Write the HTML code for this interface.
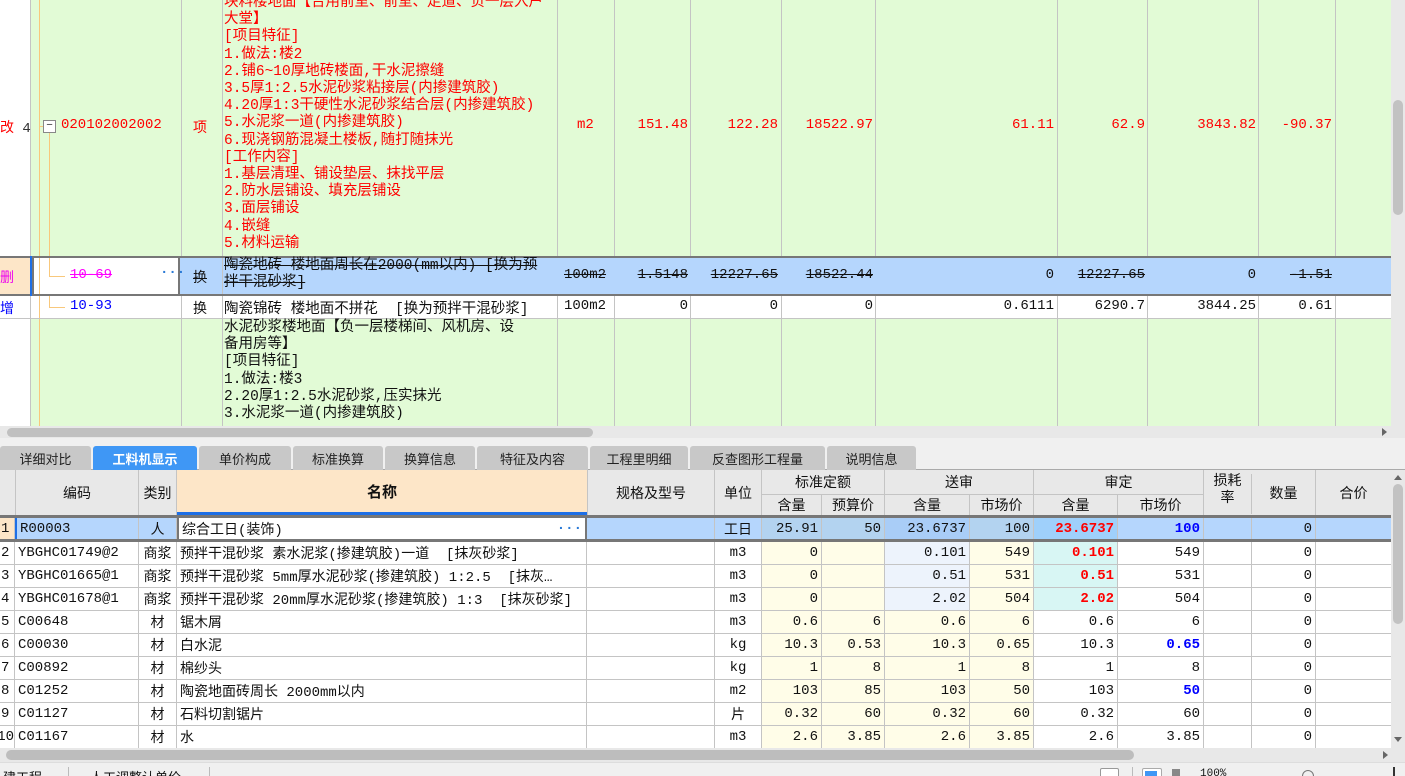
<!DOCTYPE html>
<html><head><meta charset="utf-8">
<style>
*{box-sizing:border-box;margin:0;padding:0}
body{width:1405px;height:776px;overflow:hidden;background:#f0f0f0;font-family:"Liberation Mono","Noto Sans CJK SC",monospace;font-size:14px;color:#111;position:relative}
.a{position:absolute;white-space:nowrap}
.row{position:absolute;left:0;display:flex}
.c{height:100%;border-right:1px solid #c4c4c4;white-space:nowrap;overflow:hidden;padding:0 3px;display:flex;align-items:center;flex:none}
.r{justify-content:flex-end}
.m{justify-content:center}
.red{color:#f00}.blue{color:#00f}
.s{text-decoration:line-through}
.b{font-weight:bold}
.vl{position:absolute;width:1px;background:#c4c4c4}
.tab{position:absolute;top:446px;height:24px;background:#c8c8c8;border-radius:3px 3px 0 0;display:flex;align-items:center;justify-content:center;font-size:13px;color:#222}
.br{border-bottom:1px solid #c4c4c4}
.y{background:#fffde8}.lb{background:#edf3fc}.cy{background:#d8f6f4}
.t{font-size:14.5px}
</style></head><body>

<div class="a" style="left:0;top:0;width:1391px;height:426px;background:#fff"></div>
<div class="a" style="left:30px;top:0;width:1361px;height:256px;background:#e2fbd6"></div>
<div class="a" style="left:30px;top:319px;width:1361px;height:107px;background:#e2fbd6"></div>
<div class="vl" style="left:30px;top:0;height:426px"></div>
<div class="vl" style="left:181px;top:0;height:426px"></div>
<div class="vl" style="left:222px;top:0;height:426px"></div>
<div class="vl" style="left:557px;top:0;height:426px"></div>
<div class="vl" style="left:614px;top:0;height:426px"></div>
<div class="vl" style="left:690px;top:0;height:426px"></div>
<div class="vl" style="left:781px;top:0;height:426px"></div>
<div class="vl" style="left:875px;top:0;height:426px"></div>
<div class="vl" style="left:1057px;top:0;height:426px"></div>
<div class="vl" style="left:1147px;top:0;height:426px"></div>
<div class="vl" style="left:1258px;top:0;height:426px"></div>
<div class="vl" style="left:1335px;top:0;height:426px"></div>
<div class="a" style="left:39px;top:0;width:1px;height:426px;background:#f8c87c"></div>
<div class="a" style="left:49px;top:133px;width:1px;height:175px;background:#f8c87c"></div>
<div class="a" style="left:39px;top:126px;width:4px;height:1px;background:#f8c87c"></div>
<div class="a" style="left:43px;top:120px;width:13px;height:13px;border:1px solid #888;background:#fff;font-size:11px;line-height:10px;text-align:center;color:#333">−</div>

<div class="a red" style="left:0;top:117px">改 <span style="color:#333">4</span></div>
<div class="a red" style="left:61px;top:117px">020102002002</div>
<div class="a red" style="left:193px;top:117px">项</div>
<div class="a red t" style="left:224px;top:-5px;line-height:17.2px">块料楼地面【合用前室、前室、走道、负一层入户<br>大堂】<br>[项目特征]<br>1.做法:楼2<br>2.铺6~10厚地砖楼面,干水泥擦缝<br>3.5厚1:2.5水泥砂浆粘接层(内掺建筑胶)<br>4.20厚1:3干硬性水泥砂浆结合层(内掺建筑胶)<br>5.水泥浆一道(内掺建筑胶)<br>6.现浇钢筋混凝土楼板,随打随抹光<br>[工作内容]<br>1.基层清理、铺设垫层、抹找平层<br>2.防水层铺设、填充层铺设<br>3.面层铺设<br>4.嵌缝<br>5.材料运输</div>
<div class="a red" style="left:577px;top:117px">m2</div>
<div class="a red" style="left:614px;top:117px;width:74px;text-align:right">151.48</div>
<div class="a red" style="left:690px;top:117px;width:88px;text-align:right">122.28</div>
<div class="a red" style="left:781px;top:117px;width:92px;text-align:right">18522.97</div>
<div class="a red" style="left:875px;top:117px;width:179px;text-align:right">61.11</div>
<div class="a red" style="left:1057px;top:117px;width:88px;text-align:right">62.9</div>
<div class="a red" style="left:1147px;top:117px;width:109px;text-align:right">3843.82</div>
<div class="a red" style="left:1258px;top:117px;width:74px;text-align:right">-90.37</div>

<div class="a" style="left:0;top:256px;width:1391px;height:40px;background:#b5d6fd;border-top:2px solid #777;border-bottom:2px solid #777"></div>
<div class="a" style="left:0;top:258px;width:30px;height:36px;background:#fde6c8"></div>
<div class="a" style="left:30px;top:256px;width:2px;height:40px;background:#1e6fe6"></div>
<div class="a" style="left:32px;top:258px;width:148px;height:36px;background:#fff;border:2px solid #777;border-top:0;border-bottom:0"></div>
<div class="a" style="left:39px;top:258px;width:1px;height:36px;background:#f8c87c"></div>
<div class="a" style="left:49px;top:258px;width:1px;height:18px;background:#f8c87c"></div>
<div class="a" style="left:49px;top:276px;width:16px;height:1px;background:#f8c87c"></div>
<div class="a" style="left:0;top:267px;color:#e0e">删</div>
<div class="a s" style="left:70px;top:267px;color:#f0f">10-69</div>
<div class="a" style="left:160px;top:265px;color:#2a7ad6;font-weight:bold">···</div>
<div class="vl" style="left:222px;top:258px;height:36px"></div>
<div class="a s" style="left:193px;top:267px">换</div>
<div class="a s t" style="left:224px;top:258px;line-height:17px">陶瓷地砖 楼地面周长在2000(mm以内) [换为预<br>拌干混砂浆]</div>
<div class="a s" style="left:564px;top:267px">100m2</div>
<div class="a s" style="left:614px;top:267px;width:74px;text-align:right">1.5148</div>
<div class="a s" style="left:690px;top:267px;width:88px;text-align:right">12227.65</div>
<div class="a s" style="left:781px;top:267px;width:92px;text-align:right">18522.44</div>
<div class="a" style="left:875px;top:267px;width:179px;text-align:right">0</div>
<div class="a s" style="left:1057px;top:267px;width:88px;text-align:right">12227.65</div>
<div class="a" style="left:1147px;top:267px;width:109px;text-align:right">0</div>
<div class="a s" style="left:1258px;top:267px;width:74px;text-align:right">-1.51</div>

<div class="a" style="left:0;top:318px;width:1391px;height:1px;background:#c4c4c4"></div>
<div class="a" style="left:49px;top:296px;width:1px;height:11px;background:#f8c87c"></div>
<div class="a" style="left:49px;top:307px;width:16px;height:1px;background:#f8c87c"></div>
<div class="a blue" style="left:0;top:298px">增</div>
<div class="a blue" style="left:70px;top:298px">10-93</div>
<div class="a" style="left:193px;top:298px">换</div>
<div class="a t" style="left:224px;top:297px">陶瓷锦砖 楼地面不拼花 &nbsp;[换为预拌干混砂浆]</div>
<div class="a" style="left:564px;top:298px">100m2</div>
<div class="a" style="left:614px;top:298px;width:74px;text-align:right">0</div>
<div class="a" style="left:690px;top:298px;width:88px;text-align:right">0</div>
<div class="a" style="left:781px;top:298px;width:92px;text-align:right">0</div>
<div class="a" style="left:875px;top:298px;width:179px;text-align:right">0.6111</div>
<div class="a" style="left:1057px;top:298px;width:88px;text-align:right">6290.7</div>
<div class="a" style="left:1147px;top:298px;width:109px;text-align:right">3844.25</div>
<div class="a" style="left:1258px;top:298px;width:74px;text-align:right">0.61</div>

<div class="a t" style="left:224px;top:320px;line-height:17.2px">水泥砂浆楼地面【负一层楼梯间、风机房、设<br>备用房等】<br>[项目特征]<br>1.做法:楼3<br>2.20厚1:2.5水泥砂浆,压实抹光<br>3.水泥浆一道(内掺建筑胶)</div>

<div class="a" style="left:1391px;top:0;width:14px;height:438px;background:#e8e8e8"></div>
<div class="a" style="left:1393px;top:100px;width:10px;height:115px;background:#c2c2c2;border-radius:5px"></div>
<div class="a" style="left:0;top:426px;width:1405px;height:12px;background:#e8e8e8"></div>
<div class="a" style="left:7px;top:428px;width:586px;height:9px;background:#c0c0c0;border-radius:5px"></div>
<div class="a" style="left:1382px;top:428px;width:0;height:0;border-left:5px solid #666;border-top:4px solid transparent;border-bottom:4px solid transparent"></div>

<div class="a" style="left:0;top:469px;width:1405px;height:1px;background:#aaa"></div>
<div class="tab" style="left:0;width:91px">详细对比</div>
<div class="tab" style="left:93px;width:104px;background:#3f97f5;color:#fff;font-weight:bold">工料机显示</div>
<div class="tab" style="left:199px;width:92px">单价构成</div>
<div class="tab" style="left:293px;width:90px">标准换算</div>
<div class="tab" style="left:385px;width:90px">换算信息</div>
<div class="tab" style="left:477px;width:111px">特征及内容</div>
<div class="tab" style="left:590px;width:98px">工程里明细</div>
<div class="tab" style="left:690px;width:135px">反查图形工程量</div>
<div class="tab" style="left:827px;width:89px">说明信息</div>

<div class="a" style="left:0;top:470px;width:1391px;height:48px;background:#e8e8e8;border-bottom:3px solid #777"></div>
<div class="a" style="left:177px;top:470px;width:410px;height:45px;background:#fde6c8;border-bottom:3px solid #1e6fe6;display:flex;align-items:center;justify-content:center;font-weight:bold;font-size:15px">名称</div>
<div class="a" style="left:15px;top:470px;width:124px;height:45px;border-right:1px solid #c4c4c4;border-left:1px solid #c4c4c4;display:flex;align-items:center;justify-content:center">编码</div>
<div class="a" style="left:139px;top:470px;width:38px;height:45px;border-right:1px solid #c4c4c4;display:flex;align-items:center;justify-content:center">类别</div>
<div class="a" style="left:587px;top:470px;width:128px;height:45px;border-left:1px solid #c4c4c4;border-right:1px solid #c4c4c4;display:flex;align-items:center;justify-content:center">规格及型号</div>
<div class="a" style="left:715px;top:470px;width:47px;height:45px;border-right:1px solid #c4c4c4;display:flex;align-items:center;justify-content:center">单位</div>
<div class="a" style="left:762px;top:470px;width:123px;height:25px;border-right:1px solid #c4c4c4;border-bottom:1px solid #c4c4c4;display:flex;align-items:center;justify-content:center">标准定额</div>
<div class="a" style="left:885px;top:470px;width:149px;height:25px;border-right:1px solid #c4c4c4;border-bottom:1px solid #c4c4c4;display:flex;align-items:center;justify-content:center">送审</div>
<div class="a" style="left:1034px;top:470px;width:170px;height:25px;border-right:1px solid #c4c4c4;border-bottom:1px solid #c4c4c4;display:flex;align-items:center;justify-content:center">审定</div>
<div class="a" style="left:762px;top:495px;width:60px;height:20px;border-right:1px solid #c4c4c4;text-align:center">含量</div>
<div class="a" style="left:822px;top:495px;width:63px;height:20px;border-right:1px solid #c4c4c4;text-align:center">预算价</div>
<div class="a" style="left:885px;top:495px;width:85px;height:20px;border-right:1px solid #c4c4c4;text-align:center">含量</div>
<div class="a" style="left:970px;top:495px;width:64px;height:20px;border-right:1px solid #c4c4c4;text-align:center">市场价</div>
<div class="a" style="left:1034px;top:495px;width:84px;height:20px;border-right:1px solid #c4c4c4;text-align:center">含量</div>
<div class="a" style="left:1118px;top:495px;width:86px;height:20px;border-right:1px solid #c4c4c4;text-align:center">市场价</div>
<div class="a" style="left:1204px;top:474px;width:48px;height:40px;border-right:1px solid #c4c4c4;text-align:center;line-height:17px">损耗<br>率</div>
<div class="a" style="left:1252px;top:470px;width:64px;height:45px;border-right:1px solid #c4c4c4;display:flex;align-items:center;justify-content:center">数量</div>
<div class="a" style="left:1316px;top:470px;width:75px;height:45px;display:flex;align-items:center;justify-content:center">合价</div>

<div class="a" style="left:0;top:518px;width:1391px;height:230px;background:#fff"></div>

<div class="row" style="top:518px;background:#b5d6fd;border-bottom:3px solid #777;height:24px">
 <div class="c" style="width:15px;background:#fde6c8;padding:0 1px">1</div>
 <div class="c" style="width:124px;border-left:2px solid #1e6fe6">R00003</div>
 <div class="c m" style="width:38px">人</div>
 <div class="c" style="width:410px;background:#fff;border:2px solid #777;border-top:0;border-bottom:0;justify-content:space-between">综合工日(装饰)<span style="color:#2a7ad6;font-weight:bold">···</span></div>
 <div class="c" style="width:128px"></div>
 <div class="c m" style="width:47px">工日</div>
 <div class="c r" style="width:60px;background:#b3d3f0">25.91</div>
 <div class="c r" style="width:63px;background:#b3d3f0">50</div>
 <div class="c r" style="width:85px;background:#a9cdf7">23.6737</div>
 <div class="c r" style="width:64px;background:#b3d3f0">100</div>
 <div class="c r red b" style="width:84px;background:#9fd0fb">23.6737</div>
 <div class="c r blue b" style="width:86px">100</div>
 <div class="c" style="width:48px"></div>
 <div class="c r" style="width:64px">0</div>
 <div class="c" style="width:75px;border:0"></div>
</div>

<div class="row br" style="top:542px;height:23px">
 <div class="c" style="width:15px;padding:0 1px">2</div><div class="c" style="width:124px">YBGHC01749@2</div><div class="c m" style="width:38px">商浆</div>
 <div class="c" style="width:410px">预拌干混砂浆 素水泥浆(掺建筑胶)一道 &nbsp;[抹灰砂浆]</div><div class="c" style="width:128px"></div><div class="c m" style="width:47px">m3</div>
 <div class="c r y" style="width:60px">0</div><div class="c r y" style="width:63px"></div><div class="c r lb" style="width:85px">0.101</div><div class="c r y" style="width:64px">549</div>
 <div class="c r cy red b" style="width:84px">0.101</div><div class="c r" style="width:86px">549</div><div class="c" style="width:48px"></div><div class="c r" style="width:64px">0</div><div class="c" style="width:75px;border:0"></div>
</div>
<div class="row br" style="top:565px;height:23px">
 <div class="c" style="width:15px;padding:0 1px">3</div><div class="c" style="width:124px">YBGHC01665@1</div><div class="c m" style="width:38px">商浆</div>
 <div class="c" style="width:410px">预拌干混砂浆 5mm厚水泥砂浆(掺建筑胶) 1:2.5 &nbsp;[抹灰…</div><div class="c" style="width:128px"></div><div class="c m" style="width:47px">m3</div>
 <div class="c r y" style="width:60px">0</div><div class="c r y" style="width:63px"></div><div class="c r lb" style="width:85px">0.51</div><div class="c r y" style="width:64px">531</div>
 <div class="c r cy red b" style="width:84px">0.51</div><div class="c r" style="width:86px">531</div><div class="c" style="width:48px"></div><div class="c r" style="width:64px">0</div><div class="c" style="width:75px;border:0"></div>
</div>
<div class="row br" style="top:588px;height:23px">
 <div class="c" style="width:15px;padding:0 1px">4</div><div class="c" style="width:124px">YBGHC01678@1</div><div class="c m" style="width:38px">商浆</div>
 <div class="c" style="width:410px">预拌干混砂浆 20mm厚水泥砂浆(掺建筑胶) 1:3 &nbsp;[抹灰砂浆]</div><div class="c" style="width:128px"></div><div class="c m" style="width:47px">m3</div>
 <div class="c r y" style="width:60px">0</div><div class="c r y" style="width:63px"></div><div class="c r lb" style="width:85px">2.02</div><div class="c r y" style="width:64px">504</div>
 <div class="c r cy red b" style="width:84px">2.02</div><div class="c r" style="width:86px">504</div><div class="c" style="width:48px"></div><div class="c r" style="width:64px">0</div><div class="c" style="width:75px;border:0"></div>
</div>
<div class="row br" style="top:611px;height:23px">
 <div class="c" style="width:15px;padding:0 1px">5</div><div class="c" style="width:124px">C00648</div><div class="c m" style="width:38px">材</div>
 <div class="c" style="width:410px">锯木屑</div><div class="c" style="width:128px"></div><div class="c m" style="width:47px">m3</div>
 <div class="c r y" style="width:60px">0.6</div><div class="c r y" style="width:63px">6</div><div class="c r y" style="width:85px">0.6</div><div class="c r y" style="width:64px">6</div>
 <div class="c r" style="width:84px">0.6</div><div class="c r" style="width:86px">6</div><div class="c" style="width:48px"></div><div class="c r" style="width:64px">0</div><div class="c" style="width:75px;border:0"></div>
</div>
<div class="row br" style="top:634px;height:23px">
 <div class="c" style="width:15px;padding:0 1px">6</div><div class="c" style="width:124px">C00030</div><div class="c m" style="width:38px">材</div>
 <div class="c" style="width:410px">白水泥</div><div class="c" style="width:128px"></div><div class="c m" style="width:47px">kg</div>
 <div class="c r y" style="width:60px">10.3</div><div class="c r y" style="width:63px">0.53</div><div class="c r y" style="width:85px">10.3</div><div class="c r y" style="width:64px">0.65</div>
 <div class="c r" style="width:84px">10.3</div><div class="c r blue b" style="width:86px">0.65</div><div class="c" style="width:48px"></div><div class="c r" style="width:64px">0</div><div class="c" style="width:75px;border:0"></div>
</div>
<div class="row br" style="top:657px;height:23px">
 <div class="c" style="width:15px;padding:0 1px">7</div><div class="c" style="width:124px">C00892</div><div class="c m" style="width:38px">材</div>
 <div class="c" style="width:410px">棉纱头</div><div class="c" style="width:128px"></div><div class="c m" style="width:47px">kg</div>
 <div class="c r y" style="width:60px">1</div><div class="c r y" style="width:63px">8</div><div class="c r y" style="width:85px">1</div><div class="c r y" style="width:64px">8</div>
 <div class="c r" style="width:84px">1</div><div class="c r" style="width:86px">8</div><div class="c" style="width:48px"></div><div class="c r" style="width:64px">0</div><div class="c" style="width:75px;border:0"></div>
</div>
<div class="row br" style="top:680px;height:23px">
 <div class="c" style="width:15px;padding:0 1px">8</div><div class="c" style="width:124px">C01252</div><div class="c m" style="width:38px">材</div>
 <div class="c" style="width:410px">陶瓷地面砖周长 2000mm以内</div><div class="c" style="width:128px"></div><div class="c m" style="width:47px">m2</div>
 <div class="c r y" style="width:60px">103</div><div class="c r y" style="width:63px">85</div><div class="c r y" style="width:85px">103</div><div class="c r y" style="width:64px">50</div>
 <div class="c r" style="width:84px">103</div><div class="c r blue b" style="width:86px">50</div><div class="c" style="width:48px"></div><div class="c r" style="width:64px">0</div><div class="c" style="width:75px;border:0"></div>
</div>
<div class="row br" style="top:703px;height:23px">
 <div class="c" style="width:15px;padding:0 1px">9</div><div class="c" style="width:124px">C01127</div><div class="c m" style="width:38px">材</div>
 <div class="c" style="width:410px">石料切割锯片</div><div class="c" style="width:128px"></div><div class="c m" style="width:47px">片</div>
 <div class="c r y" style="width:60px">0.32</div><div class="c r y" style="width:63px">60</div><div class="c r y" style="width:85px">0.32</div><div class="c r y" style="width:64px">60</div>
 <div class="c r" style="width:84px">0.32</div><div class="c r" style="width:86px">60</div><div class="c" style="width:48px"></div><div class="c r" style="width:64px">0</div><div class="c" style="width:75px;border:0"></div>
</div>
<div class="row" style="top:726px;height:22px">
 <div class="c" style="width:15px;padding:0;justify-content:flex-end">10</div><div class="c" style="width:124px">C01167</div><div class="c m" style="width:38px">材</div>
 <div class="c" style="width:410px">水</div><div class="c" style="width:128px"></div><div class="c m" style="width:47px">m3</div>
 <div class="c r y" style="width:60px">2.6</div><div class="c r y" style="width:63px">3.85</div><div class="c r y" style="width:85px">2.6</div><div class="c r y" style="width:64px">3.85</div>
 <div class="c r" style="width:84px">2.6</div><div class="c r" style="width:86px">3.85</div><div class="c" style="width:48px"></div><div class="c r" style="width:64px">0</div><div class="c" style="width:75px;border:0"></div>
</div>

<div class="a" style="left:1391px;top:470px;width:14px;height:278px;background:#e8e8e8"></div>
<div class="a" style="left:1394px;top:475px;width:0;height:0;border-bottom:5px solid #666;border-left:4px solid transparent;border-right:4px solid transparent"></div>
<div class="a" style="left:1393px;top:484px;width:10px;height:140px;background:#c2c2c2;border-radius:5px"></div>
<div class="a" style="left:1394px;top:737px;width:0;height:0;border-top:5px solid #666;border-left:4px solid transparent;border-right:4px solid transparent"></div>
<div class="a" style="left:0;top:748px;width:1405px;height:14px;background:#e8e8e8"></div>
<div class="a" style="left:6px;top:750px;width:1128px;height:10px;background:#bdbdbd;border-radius:5px"></div>
<div class="a" style="left:1383px;top:751px;width:0;height:0;border-left:5px solid #666;border-top:4px solid transparent;border-bottom:4px solid transparent"></div>

<div class="a" style="left:0;top:762px;width:1405px;height:14px;background:#f0f0f0;border-top:1px solid #ddd;overflow:hidden;font-size:13px">
 <div class="a" style="left:3px;top:4px">建工程</div>
 <div class="a" style="left:68px;top:4px;width:1px;height:12px;background:#bbb"></div>
 <div class="a" style="left:90px;top:4px">人工调整认单价</div>
 <div class="a" style="left:209px;top:4px;width:1px;height:12px;background:#bbb"></div>
 <div class="a" style="left:1100px;top:5px;width:19px;height:12px;border:1px solid #999;border-radius:2px;background:#fff"></div>
 <div class="a" style="left:1132px;top:4px;width:1px;height:12px;background:#bbb"></div>
 <div class="a" style="left:1142px;top:5px;width:20px;height:12px;border:1px solid #aaa;border-radius:2px;background:#fff"><div style="margin:2px;width:12px;height:8px;background:#3f97f5"></div></div>
 <div class="a" style="left:1172px;top:6px;width:8px;height:8px;background:#888"></div>
 <div class="a" style="left:1200px;top:5px;font-size:11px">100%</div>
 <div class="a" style="left:1302px;top:7px;width:12px;height:12px;border:1px solid #777;border-radius:50%"></div>
 <div class="a" style="left:1393px;top:4px;width:2px;height:10px;background:#333"></div>
</div>
</body></html>
